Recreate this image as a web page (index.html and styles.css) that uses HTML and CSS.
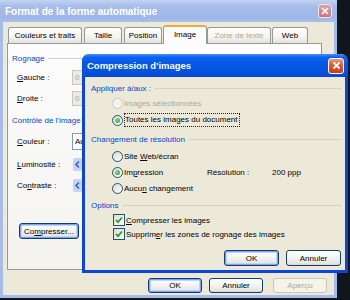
FILE: index.html
```html
<!DOCTYPE html>
<html lang="fr">
<head>
    <meta charset="UTF-8">
    <title>Compression d'images</title>
    <link rel="stylesheet" href="styles.css">
</head>
<body>
    <div class="desk">
        <div class="win outer">
            <div class="titlebar inactive">
                <span class="title">Format de la forme automatique</span>
                <span class="close off">
                    <svg width="8" height="8" viewBox="0 0 8 8"><path d="M1 1L7 7M7 1L1 7" stroke="#fff" stroke-width="1.6"/></svg>
                </span>
            </div>
            <div class="win-body">
                <div class="tabs">
                    <div class="tab t1">Couleurs et traits</div>
                    <div class="tab t2">Taille</div>
                    <div class="tab t3">Position</div>
                    <div class="tab t4 selected">Image</div>
                    <div class="tab t5 disabled">Zone de texte</div>
                    <div class="tab t6">Web</div>
                </div>
                <div class="panel">
                    <div class="group">Rognage</div>
                    <div class="field f-gauche">
                        <label><u>G</u>auche :</label>
                        <div class="box off">0 cm</div>
                    </div>
                    <div class="field f-droite">
                        <label><u>D</u>roite :</label>
                        <div class="box off">0 cm</div>
                    </div>
                    <div class="group g-controle">Contrôle de l'image</div>
                    <div class="field f-couleur">
                        <label><u>C</u>ouleur :</label>
                        <div class="box combo">Automatique</div>
                    </div>
                    <div class="field f-slider">
                        <label><u>L</u>uminosité :</label>
                        <span class="slider-btn"><svg width="7" height="9" viewBox="0 0 7 9"><path d="M5 1.5L2 4.5L5 7.5" stroke="#3f5b9a" stroke-width="1.5" fill="none"/></svg></span>
                    </div>
                    <div class="field f-slider">
                        <label>Co<u>n</u>traste :</label>
                        <span class="slider-btn"><svg width="7" height="9" viewBox="0 0 7 9"><path d="M5 1.5L2 4.5L5 7.5" stroke="#3f5b9a" stroke-width="1.5" fill="none"/></svg></span>
                    </div>
                    <button class="btn default compress">Co<u>m</u>presser...</button>
                </div>
                <div class="buttons">
                    <button class="btn default">OK</button>
                    <button class="btn cancel">Annuler</button>
                    <button class="btn disabled preview">Aperçu</button>
                </div>
            </div>
        </div>

        <div class="win inner">
            <div class="titlebar active">
                <span class="title">Compression d'images</span>
                <span class="close on">
                    <svg width="9" height="9" viewBox="0 0 9 9"><path d="M1.5 1.5L7.5 7.5M7.5 1.5L1.5 7.5" stroke="#fff" stroke-width="1.8"/></svg>
                </span>
            </div>
            <div class="inner-body">
                <div class="group">Appliquer à/aux :</div>
                <div class="opt o1 disabled"><span class="radio"></span><span>Images sélectionnées</span></div>
                <div class="opt o2"><span class="radio on"></span><span class="focus">Toutes les images du document</span></div>
                <div class="group g-res">Changement de résolution</div>
                <div class="opt o3"><span class="radio"></span><span>Site <u>W</u>eb/écran</span></div>
                <div class="opt o4">
                    <span class="opt-main"><span class="radio on"></span><span>Im<u>p</u>ression</span></span>
                    <span class="res-label">Résolution :</span>
                    <span>200 ppp</span>
                </div>
                <div class="opt o4"><span class="radio"></span><span>Aucu<u>n</u> changement</span></div>
                <div class="group g-options">Options</div>
                <div class="opt c1"><span class="check"><svg width="8" height="8" viewBox="0 0 8 8"><path d="M1 4L3 6.2L7 1.5" stroke="#21a121" stroke-width="1.8" fill="none"/></svg></span><span><u>C</u>ompresser les images</span></div>
                <div class="opt c2"><span class="check"><svg width="8" height="8" viewBox="0 0 8 8"><path d="M1 4L3 6.2L7 1.5" stroke="#21a121" stroke-width="1.8" fill="none"/></svg></span><span>Supprim<u>e</u>r les zones de rognage des images</span></div>
                <div class="inner-buttons">
                    <button class="btn default">OK</button>
                    <button class="btn">Annuler</button>
                </div>
            </div>
        </div>
    </div>
</body>
</html>
```

FILE: styles.css
```css
body {
    margin: 0;
    background-color: #11161e;
    font-family: "Liberation Sans", Arial, sans-serif;
    font-size: 8px;
    color: #000;
}
.desk {
    position: relative;
    width: 350px;
    height: 300px;
    overflow: hidden;
}
.win {
    box-sizing: border-box;
    background-color: #ece9d8;
    display: flex;
    flex-direction: column;
}
.outer {
    width: 337px;
    height: 298px;
    border: 3px solid #a6bcea;
    border-top: 0;
}
.inner {
    position: absolute;
    left: 82px;
    top: 54px;
    width: 266px;
    height: 219px;
    border: 3px solid #0b45db;
    border-top: 0;
    border-radius: 7px 7px 0 0;
}

/* title bars */
.titlebar {
    display: flex;
    align-items: center;
    justify-content: space-between;
    margin: 0 -3px;
    color: #fff;
    font-weight: bold;
}
.titlebar.inactive {
    height: 22px;
    padding: 0 5px;
    background: linear-gradient(#c2d2f3, #a6bdea 30%, #9fb7e8 80%, #a9bfeb);
    font-size: 10px;
}
.titlebar.active {
    height: 23px;
    padding: 0 4px 0 5px;
    border-radius: 7px 7px 0 0;
    background: linear-gradient(#3d8ffc 0%, #0f60ee 15%, #0656e6 50%, #0451df 80%, #0a47cc 100%);
    font-size: 9.5px;
}
.close {
    display: flex;
    align-items: center;
    justify-content: center;
    box-sizing: border-box;
    border: 1px solid #fff;
    border-radius: 3px;
}
.close.off {
    width: 14px;
    height: 14px;
    background: linear-gradient(#dca5a9, #c2767c);
    border-color: #f1e4e8;
}
.close.on {
    width: 16px;
    height: 16px;
    background: linear-gradient(#f19a7b, #e25a2c 45%, #c63d18);
}

/* outer dialog */
.win-body {
    display: flex;
    flex-direction: column;
    padding: 3px 0 0 4px;
}
.tabs {
    display: flex;
    align-items: flex-end;
    height: 18px;
    padding-left: 1px;
}
.tab {
    box-sizing: border-box;
    height: 16px;
    border: 1px solid #919b9c;
    border-bottom: 0;
    border-radius: 3px 3px 0 0;
    background: linear-gradient(#ffffff, #f4f3ee 60%, #e4e2d9);
    text-align: center;
    line-height: 15px;
}
.tab.t1 { width: 74px; }
.tab.t2 { width: 38px; margin-left: 2px; }
.tab.t3 { width: 38px; margin-left: 2px; }
.tab.t4 { width: 44px; margin-left: 1px; }
.tab.t5 { width: 64px; }
.tab.t6 { width: 36px; margin-left: 1px; }
.tab.selected {
    height: 19px;
    margin-bottom: -1px;
    border-top: 2px solid #f2aa36;
    background: #fcfcfe;
    line-height: 16px;
    position: relative;
}
.tab.disabled {
    color: #aca899;
}
.panel {
    box-sizing: border-box;
    width: 315px;
    height: 227px;
    border: 1px solid #919b9c;
    background: linear-gradient(#fcfcfe, #f4f3ee);
    padding: 8px 0 0 4px;
    display: flex;
    flex-direction: column;
    align-items: flex-start;
}
.group {
    display: flex;
    align-items: center;
    align-self: stretch;
    height: 13px;
    color: #0046d5;
}
.group::after {
    content: "";
    flex: 1;
    height: 1px;
    margin-left: 4px;
    background-color: #d5d2c2;
}
.field {
    display: flex;
    align-items: center;
    margin-left: 5px;
}
.field label {
    width: 55px;
}
.box {
    box-sizing: border-box;
    width: 70px;
    height: 15px;
    padding-left: 2px;
    line-height: 13px;
    white-space: nowrap;
}
.box.off {
    border: 1px solid #c9c7ba;
    background-color: #ebeae3;
    color: #aca899;
}
.box.combo {
    height: 17px;
    line-height: 15px;
    border: 1px solid #7f9db9;
    background-color: #fff;
}
.f-gauche { margin-top: 5px; }
.f-droite { margin-top: 6px; }
.g-controle { margin-top: 8px; }
.f-couleur { margin-top: 6px; }
.f-slider {
    height: 14px;
    margin-top: 7px;
}
.slider-btn {
    box-sizing: border-box;
    display: flex;
    align-items: center;
    justify-content: center;
    width: 9px;
    height: 13px;
    margin-left: 1px;
    border-radius: 2px;
    background-color: #c4d3fb;
}

/* buttons */
.btn {
    box-sizing: border-box;
    width: 55px;
    height: 16px;
    padding: 0;
    border: 1px solid #0f3c7a;
    border-radius: 3px;
    background: linear-gradient(#ffffff, #f3f3ee 50%, #e6e5dd 88%, #d8d3c8);
    font-family: inherit;
    font-size: 8px;
    color: #000;
}
.btn.default {
    box-shadow: inset 0 0 0 1px #7ea3ea, inset 0 0 0 2px #bfd4f9;
}
.btn.disabled {
    border-color: #c9c7ba;
    background: #f5f4ea;
    color: #aca899;
}
.btn.compress {
    width: 60px;
    margin: 31px 0 0 7px;
}
.buttons {
    display: flex;
    height: 15px;
    margin-top: 8px;
    padding-left: 141px;
}
.buttons .btn {
    width: 54px;
    height: 15px;
}
.buttons .cancel { margin-left: 7px; }
.buttons .preview { margin-left: 10px; }

/* inner dialog */
.inner-body {
    display: flex;
    flex-direction: column;
    padding: 5px 4px 0 6px;
}
.opt {
    display: flex;
    align-items: center;
    height: 14px;
    margin-left: 21px;
    white-space: nowrap;
}
.opt.disabled {
    color: #aca899;
}
.o1 { margin-top: 1px; }
.o2 { margin-top: 3px; }
.g-res { margin-top: 6px; }
.o3 { margin-top: 3px; }
.o4 { margin-top: 2px; }
.g-options { margin-top: 4px; }
.c1 { margin-top: 1px; }
.opt-main {
    display: flex;
    align-items: center;
    width: 95px;
}
.res-label {
    width: 65px;
}
.radio {
    box-sizing: border-box;
    display: flex;
    align-items: center;
    justify-content: center;
    width: 11px;
    height: 11px;
    margin-right: 1px;
    border: 1px solid #1c5180;
    border-radius: 50%;
    background: linear-gradient(135deg, #dcd9cd, #ffffff);
}
.radio.on::after {
    content: "";
    width: 5px;
    height: 5px;
    border-radius: 50%;
    background: radial-gradient(circle at 35% 35%, #7be07a, #21a121);
}
.opt.disabled .radio {
    border-color: #cac8bb;
    background: #f4f3ee;
}
.focus {
    border: 1px dotted #222;
    padding: 1px 1px 1px 0;
    line-height: 10px;
}
.check {
    box-sizing: border-box;
    display: flex;
    align-items: center;
    justify-content: center;
    width: 12px;
    height: 12px;
    margin: 0 1px 0 1px;
    border: 1px solid #1c5180;
    background: linear-gradient(135deg, #dcd9cd, #ffffff);
}
.inner-buttons {
    display: flex;
    justify-content: flex-end;
    gap: 7px;
    margin-top: 9px;
}
```
